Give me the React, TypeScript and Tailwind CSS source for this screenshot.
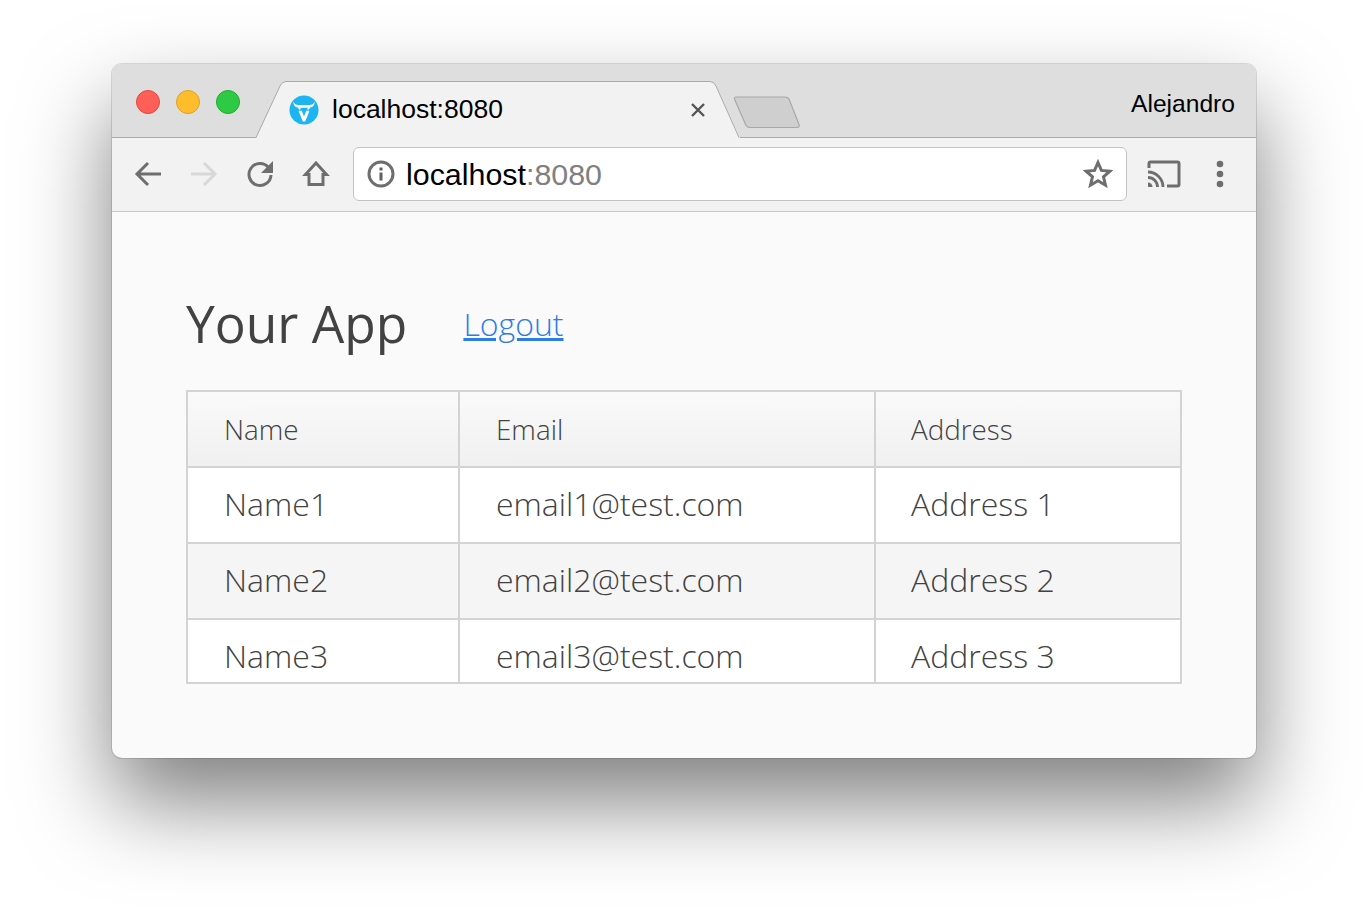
const rows = [
  { name: 'Name1', email: 'email1@test.com', address: 'Address 1', bg: 'bg-white' },
  { name: 'Name2', email: 'email2@test.com', address: 'Address 2', bg: 'bg-[#f5f5f5]' },
  { name: 'Name3', email: 'email3@test.com', address: 'Address 3', bg: 'bg-white' },
];

function Favicon() {
  return (
    <svg width="30" height="30" viewBox="0 0 30 30" className="shrink-0">
      <circle cx="15" cy="15" r="14.5" fill="#1cb4f1" />
      <path d="M4.500 6.500C5.500 9.200 7 10 9.500 10H20.500C23 10 24.500 9.200 25.500 6.500C25.800 10 24 12.300 21 12.500L20 14.500H18.500V12.800H11.500V14.500H10L9 12.500C6 12.300 4.200 10 4.500 6.500Z" fill="#fff" />
      <path d="M9.500 15.800h3.300l2.200 5.700 2.200-5.700h3.300L16.200 26.500h-2.400z" fill="#fff" />
    </svg>
  );
}

function ToolButton({ children }: { children: React.ReactNode }) {
  return <div className="flex h-[54px] w-[56px] items-center justify-center">{children}</div>;
}

function ArrowIcon({ color, flip }: { color: string; flip?: boolean }) {
  return (
    <svg width="28" height="28" viewBox="0 0 28 28" className={flip ? 'rotate-180' : ''}>
      <path d="M27 14H3M14 3 3 14l11 11" fill="none" stroke={color} strokeWidth="3" />
    </svg>
  );
}

function Cell({ w, last, children, className }: { w: string; last?: boolean; children: React.ReactNode; className: string }) {
  return (
    <div className={`${w} ${last ? '' : 'border-r-2 border-[#d3d3d3]'} flex items-center ${className}`}>
      {children}
    </div>
  );
}

export default function App() {
  return (
    <div className="h-[918px] w-[1368px] overflow-hidden bg-white pl-[112px] pt-[64px] font-['Liberation_Sans',sans-serif]">
      <div className="flex h-[694px] w-[1144px] flex-col overflow-hidden rounded-[10px] bg-[#fafafa] shadow-[0_0_0_1px_rgba(0,0,0,0.12),0_44px_88px_rgba(0,0,0,0.5)]">
        {/* tab strip */}
        <div className="flex h-[74px] shrink-0 items-start border-b border-[#a9a9a9] bg-[#dedede]">
          <div className="flex w-[144px] shrink-0 gap-[16px] pl-[24px] pt-[26px]">
            <span className="h-[24px] w-[24px] rounded-full border border-[#e2463f] bg-[#ff5f57]" />
            <span className="h-[24px] w-[24px] rounded-full border border-[#dfa023] bg-[#ffbd2e]" />
            <span className="h-[24px] w-[24px] rounded-full border border-[#1dad2b] bg-[#2fca45]" />
          </div>
          <div className="relative mt-[17px] flex h-[57px] w-[484px] shrink-0 items-center pl-[33px]">
            <svg className="absolute left-0 top-0" width="484" height="57" viewBox="0 0 484 57">
              <path d="M0 57 L24 5 Q26 .5 30 .5 H454 Q458 .5 460 5 L484 57 Z" fill="#f2f2f2" />
              <path d="M0 56.500 L24 5 Q26 .5 30 .5 H454 Q458 .5 460 5 L483 56.500" fill="none" stroke="#a9a9a9" />
            </svg>
            <span className="relative flex items-center">
              <Favicon />
              <span className="ml-[13px] text-[26.500px] leading-none text-black">localhost:8080</span>
            </span>
            <svg className="absolute left-[435px] top-[22px]" width="14" height="14" viewBox="0 0 14 14">
              <path d="M1 1l12 12M13 1 1 13" stroke="#555" strokeWidth="2.400" />
            </svg>
          </div>
          <svg className="-ml-[7px] mt-[32px] shrink-0" width="68" height="34" viewBox="0 0 68 34">
            <path d="M1.500 3 Q1 1 3 1 H52 Q55 1 56 3 L66 28.500 Q67 31.500 64 31.500 H17 Q14 31.500 13 29.500 Z" fill="#cfcfcf" stroke="#a8a8a8" strokeWidth="1.200" />
          </svg>
          <span className="ml-auto pr-[21px] pt-[26px] text-[24.600px] leading-[28px] text-black">Alejandro</span>
        </div>
        {/* toolbar */}
        <div className="flex h-[74px] shrink-0 items-start border-b border-[#c8c8c8] bg-[#f2f2f2] pl-[8px] pt-[9px]">
          <ToolButton><ArrowIcon color="#6e6e6e" /></ToolButton>
          <ToolButton><ArrowIcon color="#d8d8d8" flip /></ToolButton>
          <ToolButton>
            <svg width="28" height="28" viewBox="0 0 28 28">
              <path d="M22.500 7.500A11 11 0 1 0 25 15" fill="none" stroke="#6e6e6e" strokeWidth="3" />
              <path d="M27 1v12H15z" fill="#6e6e6e" />
            </svg>
          </ToolButton>
          <ToolButton>
            <svg width="28" height="28" viewBox="0 0 28 28">
              <path d="M14 3 3.500 14.500H7v10h14v-10h3.500z" fill="none" stroke="#6e6e6e" strokeWidth="3" />
            </svg>
          </ToolButton>
          <div className="ml-[9px] flex h-[54px] w-[774px] shrink-0 items-center rounded-[6px] border border-[#c4c4c4] bg-white pl-[13px] pr-[13px]">
            <svg width="28" height="28" viewBox="0 0 28 28" className="shrink-0">
              <circle cx="14" cy="14" r="12" fill="none" stroke="#6e6e6e" strokeWidth="3" />
              <rect x="12.500" y="12.500" width="3" height="8" fill="#5f5f5f" />
              <rect x="12.500" y="7.500" width="3" height="3" fill="#5f5f5f" />
            </svg>
            <span className="ml-[11px] pt-[1px] text-[30.400px] leading-none text-black">
              localhost<span className="text-[#808080]">:8080</span>
            </span>
            <svg width="30" height="30" viewBox="0 0 30 30" className="ml-auto shrink-0">
              <path d="M15 3.500l3.400 7.900 8.600.8-6.500 5.600 2 8.400L15 21.800l-7.500 4.400 2-8.400L3 12.200l8.600-.8z" fill="none" stroke="#6e6e6e" strokeWidth="3" />
            </svg>
          </div>
          <div className="ml-[9px] flex">
            <ToolButton>
              <svg width="34" height="28" viewBox="0 0 34 28">
                <path d="M2 8V3.500Q2 2 3.500 2H30.500Q32 2 32 3.500V24.500Q32 26 30.500 26H20" fill="none" stroke="#6e6e6e" strokeWidth="3" />
                <path d="M1 12a15 15 0 0 1 15 15M1 17.500a9.500 9.500 0 0 1 9.500 9.500" fill="none" stroke="#6e6e6e" strokeWidth="2.800" />
                <path d="M1 22.500a4.500 4.500 0 0 1 4.500 4.500H1z" fill="#6e6e6e" />
              </svg>
            </ToolButton>
            <ToolButton>
              <svg width="8" height="28" viewBox="0 0 8 28">
                <circle cx="4" cy="4" r="3.300" fill="#6e6e6e" />
                <circle cx="4" cy="14" r="3.300" fill="#6e6e6e" />
                <circle cx="4" cy="24" r="3.300" fill="#6e6e6e" />
              </svg>
            </ToolButton>
          </div>
        </div>
        {/* page */}
        <div className="flex-1 pl-[74px] pt-[76px] font-['Open_Sans',sans-serif] text-[#424242]">
          <div className="flex h-[102px] items-start">
            <h1 className="text-[51.500px] leading-[70px] font-normal">Your App</h1>
            <a href="#" className="ml-[56px] mt-[15px] text-[32px] leading-[42px] font-light text-[#2f7be6] underline">Logout</a>
          </div>
          <div className="h-[294px] w-[996px] overflow-hidden border-2 border-[#d3d3d3] font-light">
            <div className="flex h-[76px] border-b-2 border-[#d3d3d3] bg-gradient-to-b from-[#fafafa] to-[#f0f0f0] text-[27.800px]">
              <Cell w="w-[272px]" className="pl-[36px] pt-[1px]">Name</Cell>
              <Cell w="w-[416px]" className="pl-[36px] pt-[1px]">Email</Cell>
              <Cell w="w-[304px]" last className="pl-[35px] pt-[1px]">Address</Cell>
            </div>
            {rows.map((r) => (
              <div key={r.name} className={`flex h-[76px] border-b-2 border-[#d3d3d3] text-[32px] ${r.bg}`}>
                <Cell w="w-[272px]" className="pb-[3px] pl-[36px]">{r.name}</Cell>
                <Cell w="w-[416px]" className="pb-[3px] pl-[36px]">{r.email}</Cell>
                <Cell w="w-[304px]" last className="pb-[3px] pl-[35px]">{r.address}</Cell>
              </div>
            ))}
          </div>
        </div>
      </div>
    </div>
  );
}
